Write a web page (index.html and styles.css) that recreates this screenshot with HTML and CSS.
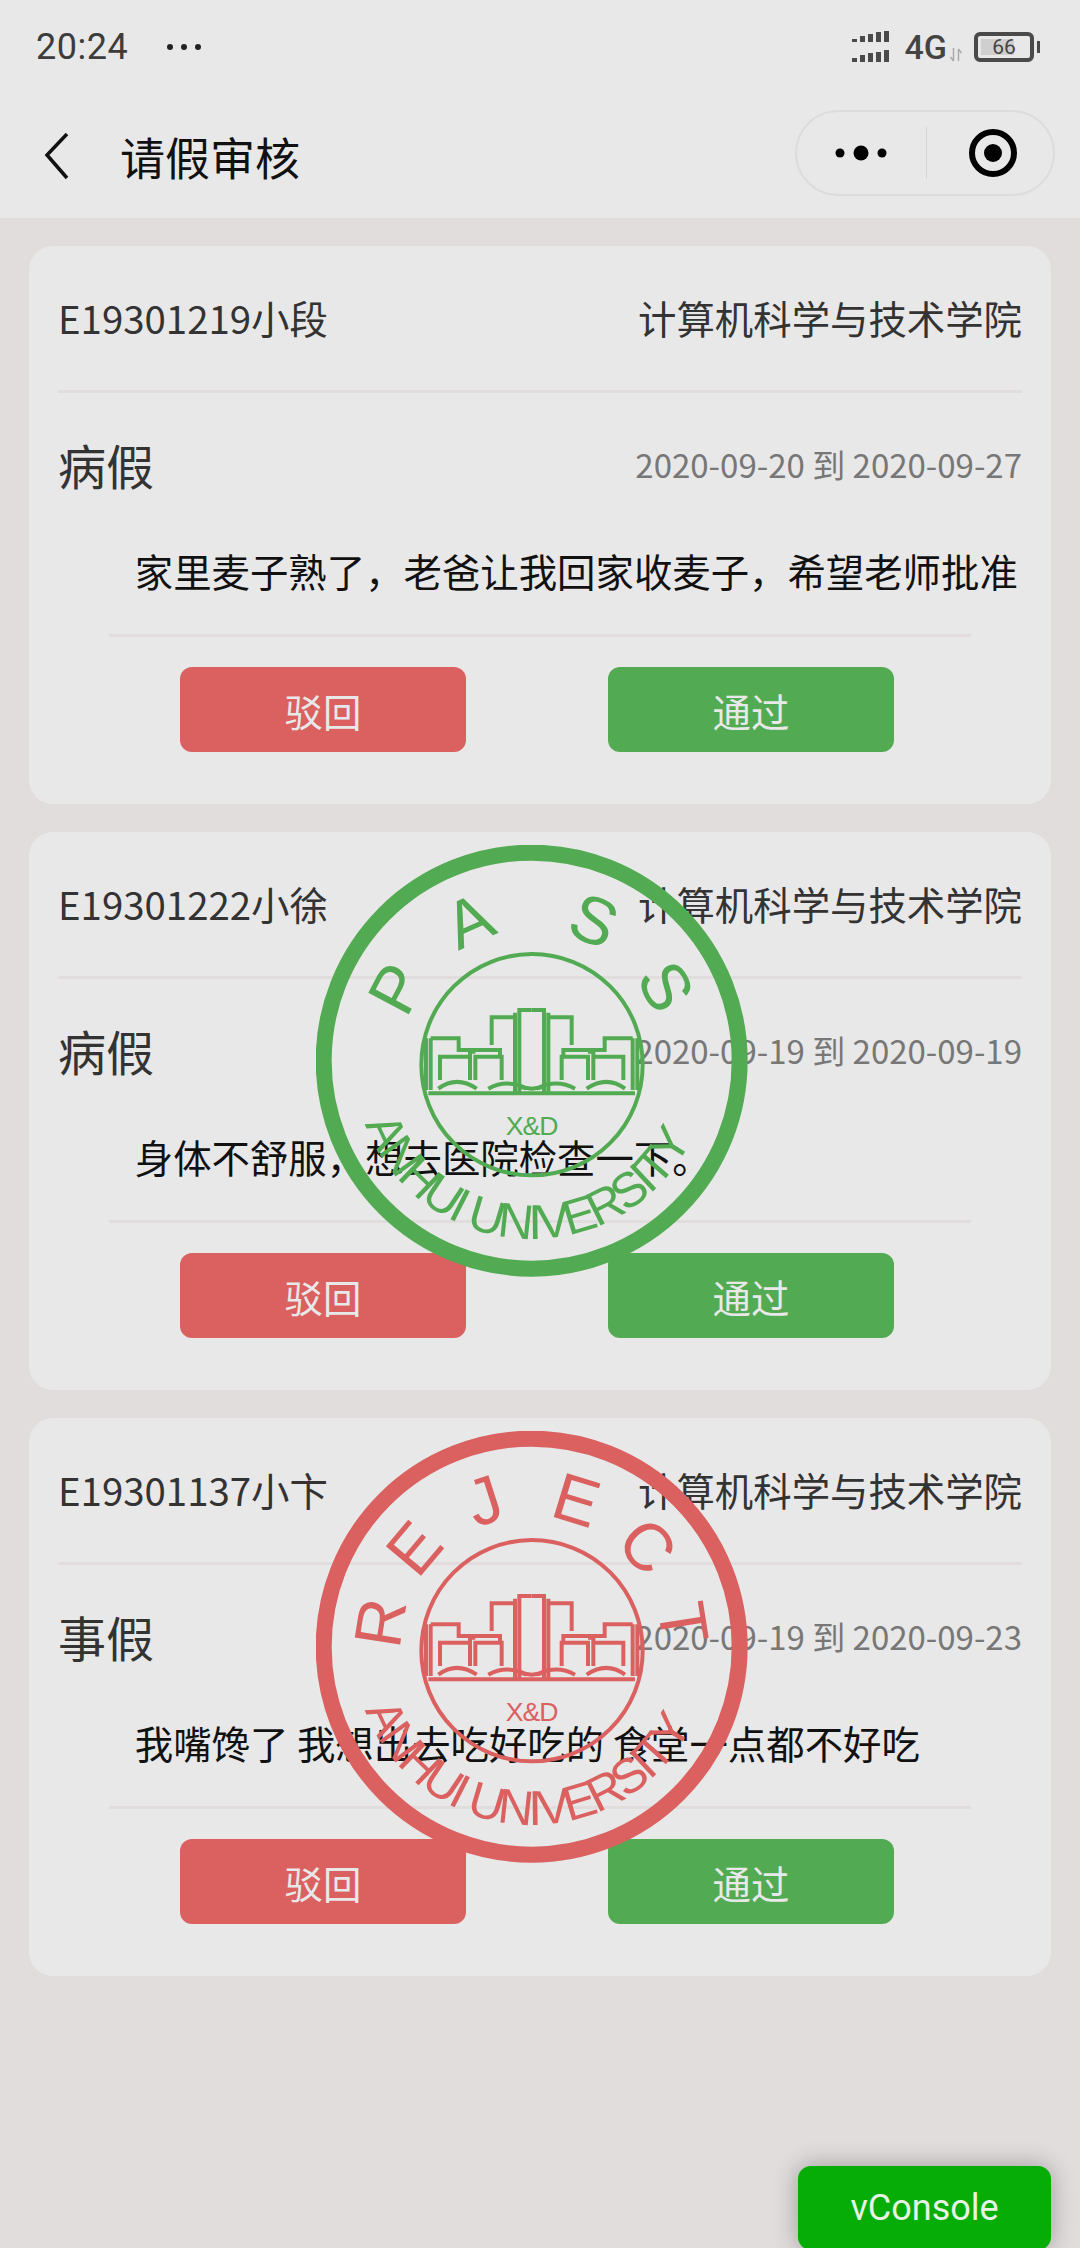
FILE: index.html
```html
<!DOCTYPE html>
<html lang="zh-CN">
<head>
  <meta charset="UTF-8" />
  <meta name="viewport" content="width=device-width,initial-scale=1" />
  <title>请假审核</title>
  <link rel="stylesheet" href="styles.css">
</head>
<body>

  <!-- shared campus drawing for both stamps, in 3x units -->
  <svg class="defs" width="0" height="0">
    <defs>
      <g id="half">
        <path d="M645 790V548M658 790V540H695M378 625V780M392 625V780"/>
        <path d="M640 562H575V645M392 625H476V660H600V680M420 750V680H505M510 750V665H526M526 750V680H605V750"/>
        <path d="M415 776Q470 735 530 776M565 776Q620 745 680 776"/>
      </g>
      <g id="campus">
        <circle cx="696" cy="704" r="332"/>
        <path d="M385 790H1005"/>
        <use href="#half"/>
        <use href="#half" transform="translate(1390 0) scale(-1 1)"/>
        <path d="M655 770L695 776L735 770"/>
      </g>
      <path id="rim" d="M195 882A535 535 0 0 0 1230 692"/>
    </defs>
  </svg>

  <div class="statusbar">
    <div class="status-left">
      <span class="clock">20:24</span>
      <svg class="status-dots" width="36" height="8" viewBox="0 0 36 8"><circle cx="4" cy="4" r="3"/><circle cx="18" cy="4" r="3"/><circle cx="32" cy="4" r="3"/></svg>
    </div>
    <div class="status-right">
      <svg class="signal" width="40" height="32" viewBox="0 0 40 32">
        <path d="M1 11h5v-3h-5zM9 11h5v-6h-5zM17 11h5v-8h-5zM25 11h5v-10h-5zM33 11h5v-11h-5z"/>
        <path d="M1 31h5v-4h-5zM9 31h5v-7h-5zM17 31h5v-9h-5zM25 31h5v-10h-5zM33 31h5v-12h-5z"/>
      </svg>
      <span class="net">4G</span>
      <svg class="updown" width="12" height="14" viewBox="0 0 12 14"><path d="M3.500 0v13M0.500 9l3 4M8.500 13V1M8.500 1l3 4"/></svg>
      <div class="battery"><span class="battery-level"></span><span class="battery-num">66</span></div>
      <span class="battery-nub"></span>
    </div>
  </div>

  <div class="navbar">
    <svg class="back" width="28" height="48" viewBox="0 0 28 48"><path d="M24 2L4 23L24 46"/></svg>
    <div class="nav-title">请假审核</div>
    <div class="capsule">
      <svg class="capsule-more" width="52" height="16" viewBox="0 0 52 16"><circle cx="5" cy="8" r="4.500"/><circle cx="26" cy="8" r="7.500"/><circle cx="47" cy="8" r="4.500"/></svg>
      <span class="capsule-line"></span>
      <svg class="capsule-close" width="48" height="48" viewBox="0 0 48 48"><circle cx="24" cy="24" r="21"/><circle class="dot" cx="24" cy="24" r="9"/></svg>
    </div>
  </div>

  <div class="list">

    <div class="card">
      <div class="card-top"><span>E19301219小段</span><span>计算机科学与技术学院</span></div>
      <div class="card-mid"><span class="type">病假</span><span class="dates">2020-09-20 到 2020-09-27</span></div>
      <p class="reason">家里麦子熟了，老爸让我回家收麦子，希望老师批准</p>
      <div class="actions">
        <button class="btn btn-reject">驳回</button>
        <button class="btn btn-pass">通过</button>
      </div>
    </div>

    <div class="card">
      <div class="card-top"><span>E19301222小徐</span><span>计算机科学与技术学院</span></div>
      <div class="card-mid"><span class="type">病假</span><span class="dates">2020-09-19 到 2020-09-19</span></div>
      <p class="reason">身体不舒服，想去医院检查一下。</p>
      <div class="actions">
        <button class="btn btn-reject">驳回</button>
        <button class="btn btn-pass">通过</button>
      </div>
      <svg class="stamp stamp-pass" width="432" height="432" viewBox="48 45 1296 1296">
        <circle class="ring" cx="695" cy="692" r="624"/>
        <use class="lines" href="#campus"/>
        <text class="xd" x="695" y="915">X&amp;D</text>
        <text class="arc"><textPath href="#rim">ANHUI UNIVERSITY</textPath></text>
        <text class="big" x="695" y="301" transform="rotate(-62 695 692)">P</text>
        <text class="big" x="695" y="301" transform="rotate(-24 695 692)">A</text>
        <text class="big" x="695" y="301" transform="rotate(24 695 692)">S</text>
        <text class="big" x="695" y="301" transform="rotate(61 695 692)">S</text>
      </svg>
    </div>

    <div class="card">
      <div class="card-top"><span>E19301137小卞</span><span>计算机科学与技术学院</span></div>
      <div class="card-mid"><span class="type">事假</span><span class="dates">2020-09-19 到 2020-09-23</span></div>
      <p class="reason">我嘴馋了 我想出去吃好吃的 食堂一点都不好吃</p>
      <div class="actions">
        <button class="btn btn-reject">驳回</button>
        <button class="btn btn-pass">通过</button>
      </div>
      <svg class="stamp stamp-reject" width="432" height="432" viewBox="48 45 1296 1296">
        <circle class="ring" cx="695" cy="692" r="624"/>
        <use class="lines" href="#campus"/>
        <text class="xd" x="695" y="915">X&amp;D</text>
        <text class="arc"><textPath href="#rim">ANHUI UNIVERSITY</textPath></text>
        <text class="big" x="695" y="301" transform="rotate(-81 695 692)">R</text>
        <text class="big" x="695" y="301" transform="rotate(-50 695 692)">E</text>
        <text class="big" x="695" y="301" transform="rotate(-18 695 692)">J</text>
        <text class="big" x="695" y="301" transform="rotate(17 695 692)">E</text>
        <text class="big" x="695" y="301" transform="rotate(49 695 692)">C</text>
        <text class="big" x="695" y="301" transform="rotate(81 695 692)">T</text>
      </svg>
    </div>

  </div>

  <div class="vconsole">vConsole</div>

</body>
</html>
```

FILE: styles.css
```css
* { box-sizing: border-box; }
html, body { margin: 0; height: 2248px; overflow: hidden; }
body { background: #e0dddc; font-family: "Noto Sans CJK SC", "Noto Sans", sans-serif; color: #333; position: relative; }
.defs { display: block; height: 0; }

/* status bar */
.statusbar { height: 94px; background: #e8e8e8; display: flex; justify-content: space-between; align-items: center; padding: 0 40px 0 36px; }
.status-left { display: flex; align-items: center; gap: 38px; }
.clock { font-family: "Roboto", sans-serif; font-size: 36px; color: #3c3c3c; letter-spacing: .5px; }
.status-dots { fill: #222; }
.status-right { display: flex; align-items: center; }
.signal { fill: #4a4a4a; margin-right: 14px; }
.net { font-family: "Roboto", sans-serif; font-weight: 500; font-size: 34px; color: #444; line-height: 1; }
.updown { fill: none; stroke: #aaa; stroke-width: 1.5; margin: 16px 12px 0 3px; }
.battery { width: 60px; height: 30px; border: 4px solid #4a4a4a; border-radius: 6px; position: relative; display: flex; align-items: center; justify-content: center; }
.battery-level { position: absolute; left: 3px; top: 3px; bottom: 3px; width: 33px; background: #cfcfcf; }
.battery-num { position: relative; font-family: "Roboto", sans-serif; font-size: 21px; color: #444; line-height: 1; }
.battery-nub { width: 3px; height: 12px; margin-left: 3px; background: #4a4a4a; }

/* navigation */
.navbar { height: 124px; background: #e8e8e8; display: flex; align-items: center; padding: 0 25px 0 43px; }
.back { fill: none; stroke: #111; stroke-width: 3.5; margin-right: 49px; }
.nav-title { font-size: 45px; color: #111; flex: 1; line-height: 1; }
.capsule { width: 260px; height: 86px; border: 2px solid #dcdcdc; border-radius: 43px; display: flex; align-items: center; margin-bottom: 6px; }
.capsule-more { fill: #000; margin-left: 38px; }
.capsule-line { width: 1px; height: 52px; background: #d6d6d6; margin: 0 42px 0 39px; }
.capsule-close { fill: none; stroke: #000; stroke-width: 6; }
.capsule-close .dot { fill: #000; stroke: none; }

/* leave cards */
.list { padding: 28px 29px 0; display: flex; flex-direction: column; gap: 28px; }
.card { position: relative; height: 558px; background: #e8e8e8; border-radius: 24px; padding: 0 29px; }
.card-top { height: 147px; border-bottom: 3px solid #e0dddc; display: flex; justify-content: space-between; align-items: center; font-size: 38.4px; line-height: 1; color: #333; padding-bottom: 2px; }
.card-mid { height: 142px; display: flex; justify-content: space-between; align-items: center; }
.type { font-size: 48px; line-height: 1; color: #333; }
.dates { font-size: 33px; line-height: 1; color: #777; }
.reason { margin: 8px 0 0; height: 91px; font-size: 38.4px; line-height: 54px; text-indent: 2em; color: #111; white-space: nowrap; }
.actions { margin: 0 51px; padding-top: 30px; border-top: 3px solid #e0dddc; display: flex; justify-content: space-between; padding-left: 71px; padding-right: 77px; }
.btn { width: 286px; height: 85px; border: 0; border-radius: 12px; color: #e8e8e8; font-family: inherit; font-size: 38.4px; padding: 0; }
.btn-reject { background: #db6060; }
.btn-pass { background: #52ab52; }

/* result stamps over the card */
.stamp { position: absolute; left: 287px; top: 13px; fill: none; }
.stamp-pass { color: #52ab52; }
.stamp-reject { color: #db6060; }
.stamp .ring { stroke: currentColor; stroke-width: 48; }
.stamp .lines { stroke: currentColor; stroke-width: 12; }
.stamp text { fill: currentColor; font-family: "Liberation Sans", sans-serif; }
.stamp .xd { font-size: 80px; text-anchor: middle; letter-spacing: -3px; }
.stamp .arc { font-size: 147px; letter-spacing: -9.300px; }
.stamp .big { font-size: 200px; text-anchor: middle; }

/* debug button */
.vconsole { position: absolute; right: 29px; top: 2166px; width: 253px; height: 84px; border-radius: 13px; background: #06ad06; color: #e6f3e6; font-family: "Roboto", sans-serif; font-size: 36px; display: flex; align-items: center; justify-content: center; box-shadow: 0 0 24px rgba(0, 0, 0, .3); }
```
